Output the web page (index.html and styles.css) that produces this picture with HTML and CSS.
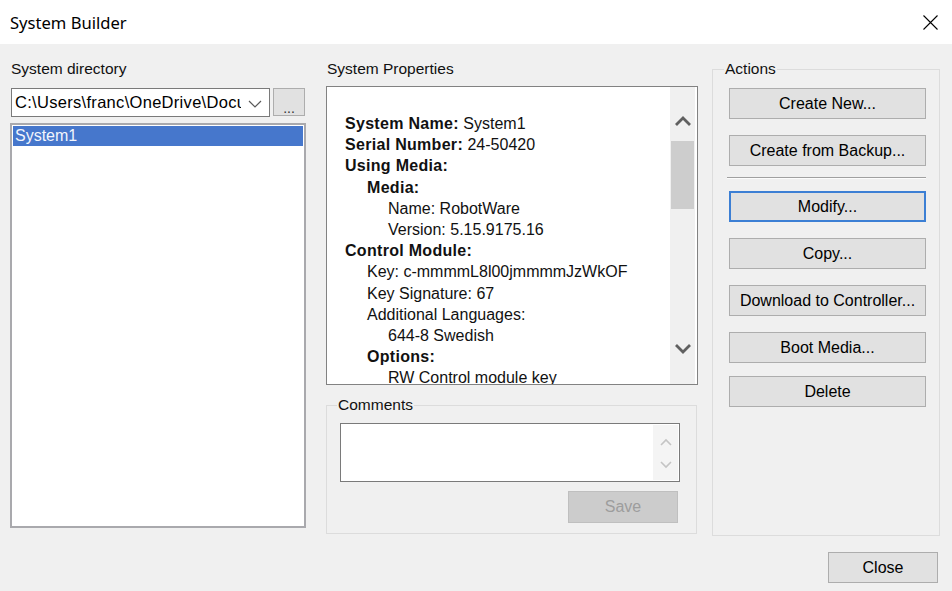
FILE: index.html
```html
<!DOCTYPE html>
<html lang="en">
<head>
<meta charset="utf-8">
<title>System Builder</title>
<link rel="stylesheet" href="styles.css">
</head>
<body>
<div class="window">
  <header class="titlebar">
    <span class="title">System Builder</span>
    <svg class="close-x" viewBox="0 0 15 15" aria-label="Close"><path d="M0.5 0.5 L14.5 14.5 M14.5 0.5 L0.5 14.5" stroke="#000" stroke-width="1.1" fill="none"/></svg>
  </header>

  <main class="content">
    <section class="col-left">
      <div class="label">System directory</div>
      <div class="dir-row">
        <div class="combo">
          <span class="combo-text">C:\Users\franc\OneDrive\Documents</span>
          <svg class="combo-chev" viewBox="0 0 14 8"><polyline points="1,1 7,7 13,1" fill="none" stroke="#5a5a5a" stroke-width="1.2"/></svg>
        </div>
        <button class="btn browse">...</button>
      </div>
      <div class="listbox">
        <div class="list-item selected">System1</div>
      </div>
    </section>

    <section class="col-mid">
      <div class="label">System Properties</div>
      <div class="props">
        <div class="props-text">
          <div class="line"><b>System Name:</b> System1</div>
          <div class="line"><b>Serial Number:</b> 24-50420</div>
          <div class="line"><b>Using Media:</b></div>
          <div class="line l1"><b>Media:</b></div>
          <div class="line l2">Name: RobotWare</div>
          <div class="line l2">Version: 5.15.9175.16</div>
          <div class="line"><b>Control Module:</b></div>
          <div class="line l1">Key: c-mmmmL8l00jmmmmJzWkOF</div>
          <div class="line l1">Key Signature: 67</div>
          <div class="line l1">Additional Languages:</div>
          <div class="line l2">644-8 Swedish</div>
          <div class="line l1"><b>Options:</b></div>
          <div class="line l2">RW Control module key</div>
        </div>
        <div class="vscroll">
          <svg class="arrow arrow-up" viewBox="0 0 18 12"><polyline points="2,10 9,3 16,10" fill="none" stroke="#606060" stroke-width="2.8"/></svg>
          <div class="thumb"></div>
          <div class="spacer"></div>
          <svg class="arrow arrow-down" viewBox="0 0 18 12"><polyline points="2,2 9,9 16,2" fill="none" stroke="#606060" stroke-width="2.8"/></svg>
        </div>
      </div>

      <fieldset class="group comments">
        <legend>Comments</legend>
        <div class="textbox">
          <div class="tb-scroll">
            <svg class="tb-arrow" viewBox="0 0 12 8"><polyline points="1,7 6,2 11,7" fill="none" stroke="#c4c4c4" stroke-width="1.6"/></svg>
            <svg class="tb-arrow" viewBox="0 0 12 8"><polyline points="1,1 6,6 11,1" fill="none" stroke="#c4c4c4" stroke-width="1.6"/></svg>
          </div>
        </div>
        <div class="save-row">
          <button class="btn save" disabled>Save</button>
        </div>
      </fieldset>
    </section>

    <fieldset class="group actions">
      <legend>Actions</legend>
      <div class="action-list">
        <button class="btn act">Create New...</button>
        <button class="btn act">Create from Backup...</button>
        <div class="separator"></div>
        <button class="btn act focused">Modify...</button>
        <button class="btn act">Copy...</button>
        <button class="btn act">Download to Controller...</button>
        <button class="btn act">Boot Media...</button>
        <button class="btn act last">Delete</button>
      </div>
    </fieldset>
  </main>

  <footer class="footer">
    <button class="btn close">Close</button>
  </footer>
</div>
</body>
</html>
```

FILE: styles.css
```css
* { box-sizing: border-box; }

html, body {
  margin: 0;
  padding: 0;
}

body {
  width: 952px;
  height: 591px;
  overflow: hidden;
  background: #f0f0f0;
  font-family: "Liberation Sans", Arial, sans-serif;
  font-size: 15.5px;
  color: #000;
}

.titlebar {
  height: 44px;
  background: #fff;
  display: flex;
  align-items: center;
  justify-content: space-between;
  padding: 0 14px 0 10px;
}

.title {
  font-family: "Noto Sans", "Open Sans", sans-serif;
  font-size: 16.6px;
  color: #000;
}

.close-x {
  width: 15px;
  height: 15px;
  margin-top: 1px;
}

.content {
  display: flex;
  align-items: flex-start;
  padding: 16px 0 0 10px;
  height: 492px;
}

.label {
  height: 18px;
  line-height: 18px;
  padding-left: 1px;
  color: #111;
}

/* Left column */
.col-left {
  width: 296px;
  display: flex;
  flex-direction: column;
}

.dir-row {
  display: flex;
  gap: 3px;
  margin-top: 10px;
  margin-left: 1px;
}

.combo {
  width: 259px;
  height: 29px;
  border: 1px solid #7a7a7a;
  background: #fff;
  display: flex;
  align-items: center;
  padding: 0 7px 0 3px;
}

.combo-text {
  flex: 1;
  overflow: hidden;
  white-space: nowrap;
  font-size: 16.5px;
  letter-spacing: 0.3px;
}

.combo-chev {
  width: 14px;
  height: 8px;
  margin-left: 7px;
  margin-top: 2px;
}

.btn {
  background: #e1e1e1;
  border: 1px solid #adadad;
  font-family: "Liberation Sans", Arial, sans-serif;
  font-size: 16px;
  color: #000;
  padding: 0;
  margin: 0;
}

.browse {
  width: 32px;
  height: 28px;
  font-size: 14px;
  line-height: 28px;
  padding-top: 5px;
  color: #333;
}

.listbox {
  margin-top: 6px;
  height: 405px;
  border: 2px solid #a9a9ad;
  background: #fff;
  padding: 1px;
}

.list-item {
  height: 20px;
  line-height: 20px;
  padding-left: 2px;
  font-size: 16px;
}

.list-item.selected {
  background: #4677cc;
  color: #f2f5fc;
}

/* Middle column */
.col-mid {
  width: 372px;
  margin-left: 20px;
  display: flex;
  flex-direction: column;
}

.props {
  margin-top: 8px;
  height: 299px;
  border: 1px solid #828282;
  background: #fff;
  display: flex;
}

.props-text {
  flex: 1;
  overflow: hidden;
  white-space: nowrap;
  padding: 26px 0 0 18px;
  font-size: 16px;
  line-height: 21.2px;
  color: #111;
}

.props-text b {
  font-weight: bold;
  letter-spacing: 0.3px;
}

.l1 { padding-left: 22px; }
.l2 { padding-left: 43px; }

.vscroll {
  width: 25px;
  margin-right: 2px;
  background: #f0f0f0;
  display: flex;
  flex-direction: column;
  align-items: center;
}

.arrow {
  width: 18px;
  height: 12px;
  flex: none;
}

.arrow-up { margin-top: 28px; }

.thumb {
  width: 23px;
  height: 68px;
  margin-top: 14px;
  background: #cdcdcd;
  flex: none;
}

.spacer { flex: 1; }

.arrow-down { margin-bottom: 29px; }

/* Group boxes */
.group {
  margin: 0;
  border: 1px solid #dcdcdc;
  min-width: 0;
}

.group legend {
  padding: 0 1px;
  line-height: 18px;
  font-size: 15.5px;
  color: #111;
}

.comments {
  margin-top: 11px;
  width: 371px;
  padding: 9px 16px 10px 13px;
}

.comments legend {
  margin-left: -3px;
}

.textbox {
  height: 59px;
  border: 1px solid #7a7a7a;
  background: #fff;
  display: flex;
  justify-content: flex-end;
  padding: 1px;
}

.tb-scroll {
  width: 25px;
  background: #f4f4f4;
  display: flex;
  flex-direction: column;
  align-items: center;
  justify-content: space-between;
  padding: 13px 0 11px;
}

.tb-arrow {
  width: 12px;
  height: 8px;
}

.save-row {
  display: flex;
  justify-content: flex-end;
  margin-top: 9px;
  padding-right: 2px;
}

.save {
  width: 110px;
  height: 32px;
  background: #cccccc;
  border-color: #bfbfbf;
  color: #9d9d9d;
}

.actions {
  margin-left: 14px;
  width: 228px;
  height: 476px;
  padding: 10px 13px 0 16px;
}

.actions legend {
  margin-left: -5px;
}

.action-list {
  display: flex;
  flex-direction: column;
}

.act {
  height: 31px;
  width: 197px;
  margin-top: 16px;
}

.act:first-child { margin-top: 0; }

.separator {
  margin: 11px 0 0 -2px;
  width: 199px;
  height: 2px;
  border-top: 1px solid #a0a0a0;
  border-bottom: 1px solid #fcfcfc;
}

.act.focused {
  margin-top: 12px;
  border: 2px solid #3c7fd4;
}

.act.last { margin-top: 13px; }

.footer {
  display: flex;
  justify-content: flex-end;
  padding: 16px 14px 0 0;
}

.close {
  width: 110px;
  height: 31px;
}
```
